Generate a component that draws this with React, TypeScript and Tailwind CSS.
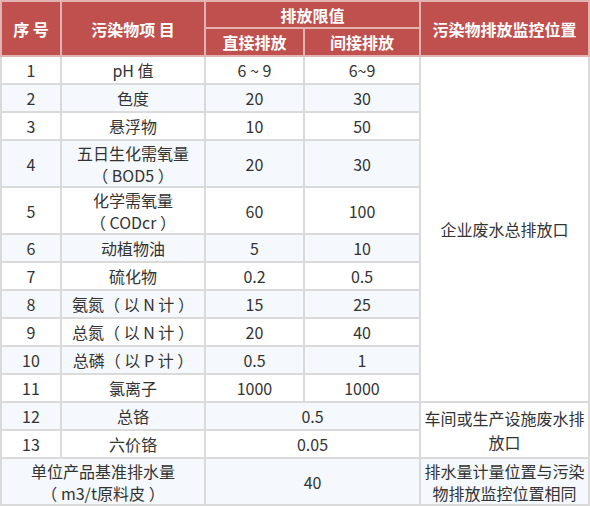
import React from 'react';

type Row = {
  no?: string;
  item: React.ReactNode;
  direct?: string;
  indirect?: string;
  tall?: boolean;
};

const rows: Row[] = [
  { no: '1', item: 'pH 值', direct: '6 ~ 9', indirect: '6~9' },
  { no: '2', item: '色度', direct: '20', indirect: '30' },
  { no: '3', item: '悬浮物', direct: '10', indirect: '50' },
  { no: '4', item: <>五日生化需氧量<br />（ BOD5 ）</>, direct: '20', indirect: '30', tall: true },
  { no: '5', item: <>化学需氧量<br />（ CODcr ）</>, direct: '60', indirect: '100', tall: true },
  { no: '6', item: '动植物油', direct: '5', indirect: '10' },
  { no: '7', item: '硫化物', direct: '0.2', indirect: '0.5' },
  { no: '8', item: '氨氮（ 以 N 计 ）', direct: '15', indirect: '25' },
  { no: '9', item: '总氮（ 以 N 计 ）', direct: '20', indirect: '40' },
  { no: '10', item: '总磷（ 以 P 计 ）', direct: '0.5', indirect: '1' },
  { no: '11', item: '氯离子', direct: '1000', indirect: '1000' },
];

const td = 'border-2 border-[#dadada] text-center align-middle p-0';
const th = 'border-2 border-[#e2b3b2] text-center align-middle p-0 font-bold text-white';

export default function App() {
  return (
    <div
      className="w-[590px] h-[506px] bg-white text-[#333] text-[16px] leading-[22px]"
      style={{ fontFamily: '"Microsoft YaHei", "Noto Sans CJK SC", sans-serif' }}
    >
      <table className="w-[588px] border-collapse table-fixed">
        <colgroup>
          <col className="w-[60px]" />
          <col className="w-[144px]" />
          <col className="w-[99px]" />
          <col className="w-[116px]" />
          <col className="w-[169px]" />
        </colgroup>
        <thead className="bg-[#c0504d]">
          <tr className="h-[27px]">
            <th rowSpan={2} className={th}>序 号</th>
            <th rowSpan={2} className={th}>污染物项 目</th>
            <th colSpan={2} className={th}>排放限值</th>
            <th rowSpan={2} className={th}>污染物排放监控位置</th>
          </tr>
          <tr className="h-[28px]">
            <th className={th}>直接排放</th>
            <th className={th}>间接排放</th>
          </tr>
        </thead>
        <tbody>
          {rows.map((r, i) => (
            <tr
              key={r.no}
              className={`${r.tall ? 'h-[47px]' : 'h-[28px]'} ${i % 2 === 1 ? 'bg-[#f5f9fd]' : 'bg-white'}`}
            >
              <td className={td}>{r.no}</td>
              <td className={td}>{r.item}</td>
              <td className={td}>{r.direct}</td>
              <td className={td}>{r.indirect}</td>
              {i === 0 && (
                <td rowSpan={11} className={`${td} bg-white`}>
                  企业废水总排放口
                </td>
              )}
            </tr>
          ))}
          <tr className="h-[28px] bg-[#f5f9fd]">
            <td className={td}>12</td>
            <td className={td}>总铬</td>
            <td colSpan={2} className={td}>0.5</td>
            <td rowSpan={2} className={`${td} bg-white leading-[24px]`}>
              车间或生产设施废水排<br />放口
            </td>
          </tr>
          <tr className="h-[28px] bg-white">
            <td className={td}>13</td>
            <td className={td}>六价铬</td>
            <td colSpan={2} className={td}>0.05</td>
          </tr>
          <tr className="h-[47px] bg-[#f5f9fd]">
            <td colSpan={2} className={td}>
              单位产品基准排水量<br />（ m3/t原料皮 ）
            </td>
            <td colSpan={2} className={td}>40</td>
            <td className={td}>
              排水量计量位置与污染<br />物排放监控位置相同
            </td>
          </tr>
        </tbody>
      </table>
    </div>
  );
}
